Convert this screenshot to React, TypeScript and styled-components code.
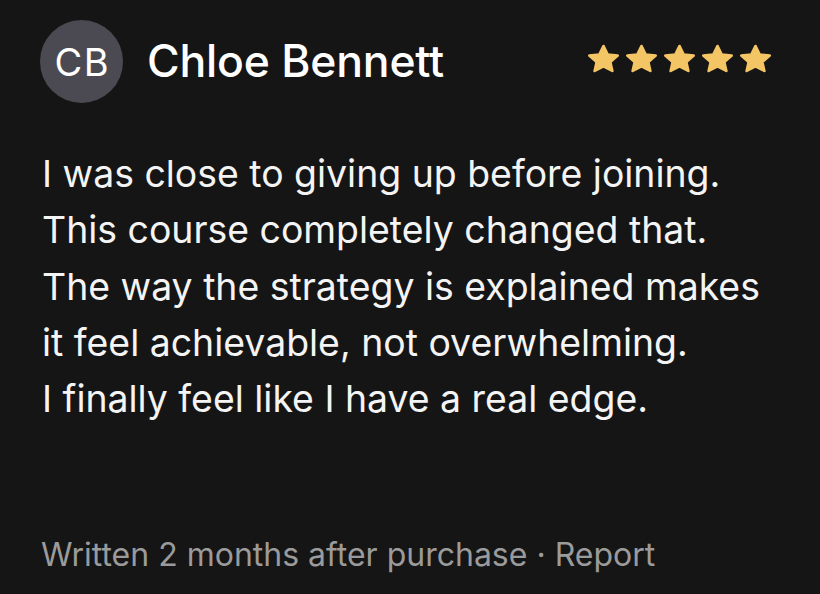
import React from "react";
import styled, { createGlobalStyle } from "styled-components";

const Global = createGlobalStyle`
    html, body {
        margin: 0;
        padding: 0;
        background: #151515;
    }
    body {
        font-family: Inter, "Open Sans", sans-serif;
        -webkit-font-smoothing: antialiased;
    }
`

const Card = styled.section`
    width: 820px;
    height: 594px;
    box-sizing: border-box;
    padding: 20px 48px 0 40px;
    background-color: #151515;
    display: flex;
    flex-direction: column;
`
const Header = styled.div`
    display: flex;
    align-items: center;
    justify-content: space-between;
`
const UserRow = styled.div`
    display: flex;
    align-items: center;
    gap: 24px;
`
const Avatar = styled.div`
    width: 83px;
    height: 83px;
    border-radius: 50%;
    background-color: #4b4a52;
    color: #ffffff;
    display: flex;
    align-items: center;
    justify-content: center;
    font-size: 38px;
    font-weight: 400;
    letter-spacing: 1.5px;
    text-indent: 1.5px;
`
const UserName = styled.h1`
    margin: -2px 0 0 0;
    font-size: 44.5px;
    font-weight: 500;
    color: #ffffff;
    letter-spacing: -0.2px;
`
const Stars = styled.div`
    display: flex;
    gap: 5px;
    margin-top: -6px;
`
const Content = styled.p`
    margin: 43px 0 0 2px;
    color: #f4f4f4;
    font-size: 37.4px;
    line-height: 56.3px;
    font-weight: 400;
`
const Footer = styled.p`
    margin: auto 0 20px 1px;
    color: #9b9b9b;
    font-size: 32px;
`

const Star = () => (
    <svg width="33" height="29" viewBox="0 0 34 32" preserveAspectRatio="none">
        <path
            d="M17 2.2 L21.3 11.6 L31.6 12.8 L24 19.8 L26.1 29.8 L17 24.7 L7.9 29.8 L10 19.8 L2.4 12.8 L12.7 11.6 Z"
            fill="#f3c564"
            stroke="#f3c564"
            strokeWidth="2.8"
            strokeLinejoin="round"
        />
    </svg>
)

const lines = [
    "I was close to giving up before joining.",
    "This course completely changed that.",
    "The way the strategy is explained makes",
    "it feel achievable, not overwhelming.",
    "I finally feel like I have a real edge.",
]

const App: React.FC = () => {
    return (
        <>
            <Global />
            <Card>
                <Header>
                    <UserRow>
                        <Avatar>CB</Avatar>
                        <UserName>Chloe Bennett</UserName>
                    </UserRow>
                    <Stars>
                        {[0, 1, 2, 3, 4].map((i) => <Star key={i} />)}
                    </Stars>
                </Header>
                <Content>
                    {lines.map((l, i) => (
                        <React.Fragment key={i}>
                            {l}
                            {i < lines.length - 1 && <br />}
                        </React.Fragment>
                    ))}
                </Content>
                <Footer>Written 2 months after purchase · Report</Footer>
            </Card>
        </>
    )
}

export default App
